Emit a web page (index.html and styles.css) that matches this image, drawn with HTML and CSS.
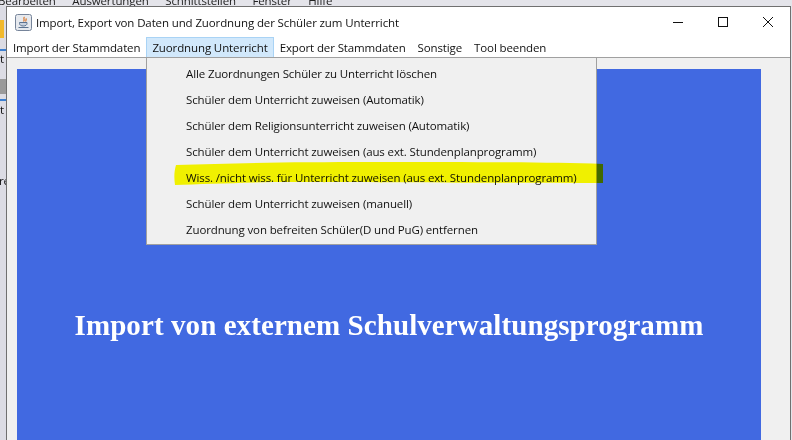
FILE: index.html
```html
<!DOCTYPE html>
<html lang="de">
<head>
    <meta charset="UTF-8">
    <meta name="viewport" content="width=device-width, initial-scale=1.0">
    <title>Import, Export von Daten und Zuordnung der Schüler zum Unterricht</title>
    <link rel="stylesheet" href="styles.css">
</head>
<body>
    <!-- application behind the dialog, only its edge is visible -->
    <div class="back-menu">
        <span>Bearbeiten</span>
        <span>Auswertungen</span>
        <span>Schnittstellen</span>
        <span>Fenster</span>
        <span>Hilfe</span>
    </div>
    <div class="back-strip">
        <div class="back-icon"></div>
        <div class="back-line back-line-1"></div>
        <div class="back-text back-text-1">t</div>
        <div class="back-grey"></div>
        <div class="back-line back-line-2"></div>
        <div class="back-text back-text-2">t</div>
        <div class="back-text back-text-3">re</div>
    </div>

    <div class="window">
        <div class="title-bar">
            <svg class="java-icon" width="17" height="17" viewBox="0 0 17 17">
                <rect x="0.500" y="0.500" width="16" height="16" rx="2" fill="#e6e9ee" stroke="#76849a"/>
                <path d="M9.500 3c-2 1.500 1 2.500-1 4.500M11.500 4.500c-1 1 0 2-1 3" fill="none" stroke="#d9762b" stroke-width="1.200"/>
                <path d="M4.500 8.500h7.500v1c0 1.500-1.500 2.500-3.700 2.500s-3.800-1-3.800-2.500z" fill="#c9d2df" stroke="#5b7391"/>
                <path d="M3.500 13.500h10" stroke="#5b7391"/>
            </svg>
            <span class="title-text">Import, Export von Daten und Zuordnung der Schüler zum Unterricht</span>
            <div class="window-buttons">
                <svg width="12" height="12" viewBox="0 0 12 12"><path d="M1 6.500h10" stroke="#111"/></svg>
                <svg width="12" height="12" viewBox="0 0 12 12"><rect x="1.500" y="1.500" width="9" height="9" fill="none" stroke="#111"/></svg>
                <svg width="12" height="12" viewBox="0 0 12 12"><path d="M1 1l10 10M11 1L1 11" stroke="#111" fill="none"/></svg>
            </div>
        </div>

        <div class="menu-bar">
            <div class="menu-item">Import der Stammdaten</div>
            <div class="menu-item active">Zuordnung Unterricht</div>
            <div class="menu-item">Export der Stammdaten</div>
            <div class="menu-item">Sonstige</div>
            <div class="menu-item">Tool beenden</div>
        </div>

        <div class="content">
            <div class="panel">
                <h1>Import von externem Schulverwaltungsprogramm</h1>
            </div>
        </div>
    </div>

    <div class="popup">
        <div class="popup-item">Alle Zuordnungen Schüler zu Unterricht löschen</div>
        <div class="popup-item">Schüler dem Unterricht zuweisen (Automatik)</div>
        <div class="popup-item">Schüler dem Religionsunterricht zuweisen (Automatik)</div>
        <div class="popup-item">Schüler dem Unterricht zuweisen (aus ext. Stundenplanprogramm)</div>
        <div class="popup-item">Wiss. /nicht wiss. für Unterricht zuweisen (aus ext. Stundenplanprogramm)</div>
        <div class="popup-item">Schüler dem Unterricht zuweisen (manuell)</div>
        <div class="popup-item">Zuordnung von befreiten Schüler(D und PuG) entfernen</div>
    </div>

    <!-- marker stroke drawn over the screenshot -->
    <svg class="marker" width="434" height="26" viewBox="0 0 434 26">
        <path d="M4 5C60 3 120 2 200 2c90 0 170 0 231 2v19c-120 0-250-1-330-1C60 23 30 24 3 25 2 18 2 12 4 5z" fill="#ffff00"/>
    </svg>
</body>
</html>
```

FILE: styles.css
```css
body {
    margin: 0;
    width: 792px;
    height: 440px;
    overflow: hidden;
    position: relative;
    background-color: #e4e4ea;
    font-family: "Open Sans", "Noto Sans", sans-serif;
    font-size: 11.5px;
    letter-spacing: -0.12px;
    color: #111;
}

.back-menu {
    position: absolute;
    top: -7px;
    left: -2px;
    height: 13px;
    overflow: hidden;
    display: flex;
    gap: 16.500px;
    color: #222;
    white-space: nowrap;
}

.back-strip {
    position: absolute;
    top: 6px;
    left: 0;
    width: 6px;
    height: 434px;
    overflow: hidden;
    background-color: #dcdce4;
}

.back-icon {
    position: absolute;
    top: 14px;
    left: 0;
    width: 4px;
    height: 18px;
    background-color: #f2b92c;
}

.back-line {
    position: absolute;
    left: 0;
    width: 6px;
    height: 2px;
    background-color: #3c7fd0;
}

.back-line-1 { top: 43px; }
.back-line-2 { top: 93px; }

.back-grey {
    position: absolute;
    top: 73px;
    left: 0;
    width: 6px;
    height: 15px;
    background-color: #9a9a9a;
}

.back-text {
    position: absolute;
    left: 0;
    line-height: 14px;
}

.back-text-1 { top: 46px; }
.back-text-2 { top: 97px; }
.back-text-3 { top: 168px; left: -1px; }

.window {
    position: absolute;
    top: 6px;
    left: 6px;
    width: 785px;
    height: 440px;
    border: 1px solid #707070;
    border-bottom: none;
    box-sizing: border-box;
    display: flex;
    flex-direction: column;
    background-color: #fff;
}

.title-bar {
    height: 30px;
    display: flex;
    align-items: center;
    padding-left: 8px;
    gap: 4px;
    flex-shrink: 0;
}

.window-buttons {
    margin-left: auto;
    display: flex;
    gap: 33px;
    padding-right: 16px;
}

.menu-bar {
    height: 20px;
    display: flex;
    flex-shrink: 0;
    border-bottom: 1px solid #a0a0a0;
}

.menu-item {
    padding: 0 5px;
    line-height: 20px;
    border: 1px solid transparent;
    border-bottom: none;
}

.menu-item.active {
    background-color: #d1e8fb;
    border-color: #a9d3f5;
}

.content {
    flex: 1;
    background-color: #f0f0f0;
    padding: 11px 29px 0 10px;
    display: flex;
}

.panel {
    flex: 1;
    background-color: #4169e1;
    display: flex;
    justify-content: center;
    padding-top: 238px;
}

.panel h1 {
    margin: 0;
    font-family: "Liberation Serif", serif;
    font-size: 29px;
    line-height: 36px;
    font-weight: bold;
    letter-spacing: 0.08px;
    color: #fff;
}

.popup {
    position: absolute;
    top: 57px;
    left: 146px;
    width: 451px;
    height: 188px;
    box-sizing: border-box;
    padding: 3px 0 0 39px;
    background-color: #f0f0f0;
    border: 1px solid #a0a0a0;
}

.popup-item {
    height: 26px;
    line-height: 26px;
    white-space: nowrap;
}

.marker {
    position: absolute;
    top: 160px;
    left: 172px;
    mix-blend-mode: multiply;
}
```
